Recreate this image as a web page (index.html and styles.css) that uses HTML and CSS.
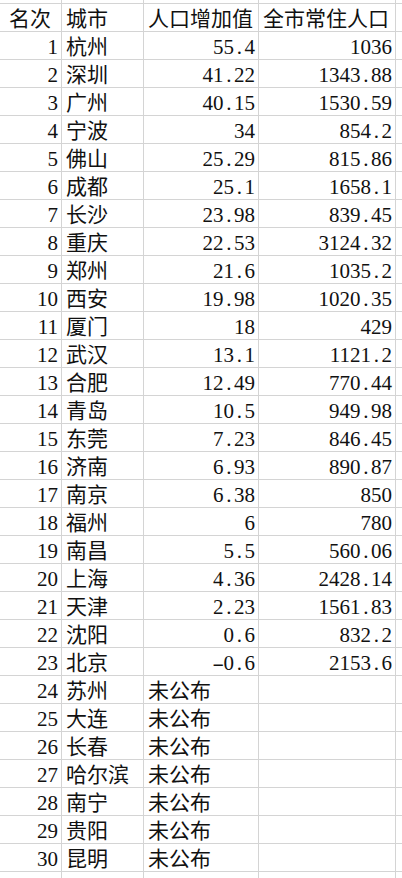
FILE: index.html
```html
<!DOCTYPE html>
<html lang="zh-CN">
<head>
<meta charset="utf-8">
<title>城市人口增加值</title>
<link rel="stylesheet" href="styles.css">
</head>
<body>
<table class="sheet">
  <colgroup>
    <col class="c-rank"><col class="c-city"><col class="c-inc"><col class="c-pop"><col class="c-rest">
  </colgroup>
  <tr class="spacer"><td></td><td></td><td></td><td></td><td></td></tr>
  <tr>
    <td class="txt first">名次</td><td class="txt">城市</td><td class="txt">人口增加值</td><td class="txt">全市常住人口</td><td></td>
  </tr>
  <tr><td class="num">1</td><td class="txt">杭州</td><td class="num">55<span class="pt">.</span>4</td><td class="num">1036</td><td></td></tr>
  <tr><td class="num">2</td><td class="txt">深圳</td><td class="num">41<span class="pt">.</span>22</td><td class="num">1343<span class="pt">.</span>88</td><td></td></tr>
  <tr><td class="num">3</td><td class="txt">广州</td><td class="num">40<span class="pt">.</span>15</td><td class="num">1530<span class="pt">.</span>59</td><td></td></tr>
  <tr><td class="num">4</td><td class="txt">宁波</td><td class="num">34</td><td class="num">854<span class="pt">.</span>2</td><td></td></tr>
  <tr><td class="num">5</td><td class="txt">佛山</td><td class="num">25<span class="pt">.</span>29</td><td class="num">815<span class="pt">.</span>86</td><td></td></tr>
  <tr><td class="num">6</td><td class="txt">成都</td><td class="num">25<span class="pt">.</span>1</td><td class="num">1658<span class="pt">.</span>1</td><td></td></tr>
  <tr><td class="num">7</td><td class="txt">长沙</td><td class="num">23<span class="pt">.</span>98</td><td class="num">839<span class="pt">.</span>45</td><td></td></tr>
  <tr><td class="num">8</td><td class="txt">重庆</td><td class="num">22<span class="pt">.</span>53</td><td class="num">3124<span class="pt">.</span>32</td><td></td></tr>
  <tr><td class="num">9</td><td class="txt">郑州</td><td class="num">21<span class="pt">.</span>6</td><td class="num">1035<span class="pt">.</span>2</td><td></td></tr>
  <tr><td class="num">10</td><td class="txt">西安</td><td class="num">19<span class="pt">.</span>98</td><td class="num">1020<span class="pt">.</span>35</td><td></td></tr>
  <tr><td class="num">11</td><td class="txt">厦门</td><td class="num">18</td><td class="num">429</td><td></td></tr>
  <tr><td class="num">12</td><td class="txt">武汉</td><td class="num">13<span class="pt">.</span>1</td><td class="num">1121<span class="pt">.</span>2</td><td></td></tr>
  <tr><td class="num">13</td><td class="txt">合肥</td><td class="num">12<span class="pt">.</span>49</td><td class="num">770<span class="pt">.</span>44</td><td></td></tr>
  <tr><td class="num">14</td><td class="txt">青岛</td><td class="num">10<span class="pt">.</span>5</td><td class="num">949<span class="pt">.</span>98</td><td></td></tr>
  <tr><td class="num">15</td><td class="txt">东莞</td><td class="num">7<span class="pt">.</span>23</td><td class="num">846<span class="pt">.</span>45</td><td></td></tr>
  <tr><td class="num">16</td><td class="txt">济南</td><td class="num">6<span class="pt">.</span>93</td><td class="num">890<span class="pt">.</span>87</td><td></td></tr>
  <tr><td class="num">17</td><td class="txt">南京</td><td class="num">6<span class="pt">.</span>38</td><td class="num">850</td><td></td></tr>
  <tr><td class="num">18</td><td class="txt">福州</td><td class="num">6</td><td class="num">780</td><td></td></tr>
  <tr><td class="num">19</td><td class="txt">南昌</td><td class="num">5<span class="pt">.</span>5</td><td class="num">560<span class="pt">.</span>06</td><td></td></tr>
  <tr><td class="num">20</td><td class="txt">上海</td><td class="num">4<span class="pt">.</span>36</td><td class="num">2428<span class="pt">.</span>14</td><td></td></tr>
  <tr><td class="num">21</td><td class="txt">天津</td><td class="num">2<span class="pt">.</span>23</td><td class="num">1561<span class="pt">.</span>83</td><td></td></tr>
  <tr><td class="num">22</td><td class="txt">沈阳</td><td class="num">0<span class="pt">.</span>6</td><td class="num">832<span class="pt">.</span>2</td><td></td></tr>
  <tr><td class="num">23</td><td class="txt">北京</td><td class="num"><span class="mn">-</span>0<span class="pt">.</span>6</td><td class="num">2153<span class="pt">.</span>6</td><td></td></tr>
  <tr><td class="num">24</td><td class="txt">苏州</td><td class="txt">未公布</td><td></td><td></td></tr>
  <tr><td class="num">25</td><td class="txt">大连</td><td class="txt">未公布</td><td></td><td></td></tr>
  <tr><td class="num">26</td><td class="txt">长春</td><td class="txt">未公布</td><td></td><td></td></tr>
  <tr><td class="num">27</td><td class="txt">哈尔滨</td><td class="txt">未公布</td><td></td><td></td></tr>
  <tr><td class="num">28</td><td class="txt">南宁</td><td class="txt">未公布</td><td></td><td></td></tr>
  <tr><td class="num">29</td><td class="txt">贵阳</td><td class="txt">未公布</td><td></td><td></td></tr>
  <tr><td class="num">30</td><td class="txt">昆明</td><td class="txt">未公布</td><td></td><td></td></tr>
  <tr><td></td><td></td><td></td><td></td><td></td></tr>
</table>
</body>
</html>
```
FILE: styles.css
```css
html, body {
  margin: 0;
  padding: 0;
  background: #ffffff;
  overflow: hidden;
}

.sheet {
  border-collapse: separate;
  border-spacing: 0;
  table-layout: fixed;
  width: 402px;
  font-family: "Liberation Serif", "Noto Sans CJK SC", serif;
  font-size: 21px;
  line-height: 24px;
  color: #111111;
}

.c-rank { width: 62px; }
.c-city { width: 82px; }
.c-inc { width: 115px; }
.c-pop { width: 137px; }
.c-rest { width: 6px; }

.sheet td {
  box-sizing: border-box;
  height: 28px;
  padding: 0 3px 0 4px;
  border-right: 1px solid #d4d4d4;
  border-bottom: 1px solid #d4d4d4;
  vertical-align: bottom;
  white-space: nowrap;
  overflow: hidden;
}

.sheet td:last-child {
  padding: 0;
  border-right: none;
}

.sheet .spacer td {
  height: 4px;
  padding: 0;
}

.sheet td.num {
  text-align: right;
  padding-right: 3px;
}

.sheet td.txt {
  text-align: left;
  padding-left: 4px;
}

.sheet td.first {
  padding-left: 9px;
}

.pt {
  display: inline-block;
  width: 10.5px;
  text-align: center;
}

.mn {
  display: inline-block;
  width: 10.5px;
  text-align: center;
  transform: scaleX(1.7);
}
```
